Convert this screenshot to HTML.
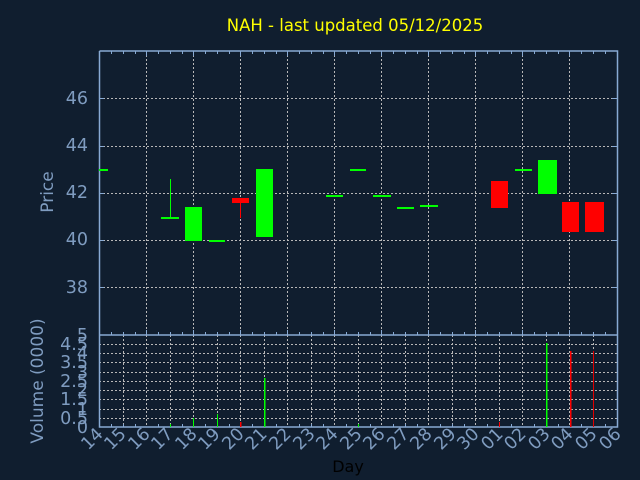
<!DOCTYPE html>
<html><head><meta charset="utf-8"><style>
html,body{margin:0;padding:0;background:#101e2f;width:640px;height:480px;overflow:hidden}
svg text{font-family:"DejaVu Sans","Liberation Sans",sans-serif}
</style></head><body>
<svg width="640" height="480" xmlns="http://www.w3.org/2000/svg">
<rect width="640" height="480" fill="#101e2f"/>
<text x="355" y="31" fill="#ffff00" font-size="16.5" text-anchor="middle">NAH - last updated 05/12/2025</text>
<g stroke="#b8b8b8" stroke-width="1" stroke-dasharray="2,2">
<line x1="99" y1="98.5" x2="617" y2="98.5"/>
<line x1="99" y1="146.5" x2="617" y2="146.5"/>
<line x1="99" y1="193.5" x2="617" y2="193.5"/>
<line x1="99" y1="240.5" x2="617" y2="240.5"/>
<line x1="99" y1="287.5" x2="617" y2="287.5"/>
<line x1="146.5" y1="51" x2="146.5" y2="427"/>
<line x1="193.5" y1="51" x2="193.5" y2="427"/>
<line x1="240.5" y1="51" x2="240.5" y2="427"/>
<line x1="287.5" y1="51" x2="287.5" y2="427"/>
<line x1="334.5" y1="51" x2="334.5" y2="427"/>
<line x1="381.5" y1="51" x2="381.5" y2="427"/>
<line x1="428.5" y1="51" x2="428.5" y2="427"/>
<line x1="475.5" y1="51" x2="475.5" y2="427"/>
<line x1="522.5" y1="51" x2="522.5" y2="427"/>
<line x1="569.5" y1="51" x2="569.5" y2="427"/>
</g>
<g stroke="#b8b8b8" stroke-width="1" stroke-dasharray="2,2">
<line x1="99" y1="344.5" x2="617" y2="344.5"/>
<line x1="99" y1="353.5" x2="617" y2="353.5"/>
<line x1="99" y1="362.5" x2="617" y2="362.5"/>
<line x1="99" y1="372.5" x2="617" y2="372.5"/>
<line x1="99" y1="381.5" x2="617" y2="381.5"/>
<line x1="99" y1="390.5" x2="617" y2="390.5"/>
<line x1="99" y1="399.5" x2="617" y2="399.5"/>
<line x1="99" y1="409.5" x2="617" y2="409.5"/>
<line x1="99" y1="418.5" x2="617" y2="418.5"/>
<line x1="123.5" y1="335" x2="123.5" y2="427"/>
<line x1="170.5" y1="335" x2="170.5" y2="427"/>
<line x1="217.5" y1="335" x2="217.5" y2="427"/>
<line x1="264.5" y1="335" x2="264.5" y2="427"/>
<line x1="311.5" y1="335" x2="311.5" y2="427"/>
<line x1="358.5" y1="335" x2="358.5" y2="427"/>
<line x1="405.5" y1="335" x2="405.5" y2="427"/>
<line x1="452.5" y1="335" x2="452.5" y2="427"/>
<line x1="499.5" y1="335" x2="499.5" y2="427"/>
<line x1="546.5" y1="335" x2="546.5" y2="427"/>
<line x1="593.5" y1="335" x2="593.5" y2="427"/>
</g>
<g stroke="#88aad4" stroke-width="1.5" fill="none">
<path d="M99.5 51 V427 H617.5 V51 H99.5"/>
<line x1="99" y1="335" x2="617" y2="335"/>
</g>
<g stroke="#88aad4" stroke-width="1">
<path d="M111.5 51v3M123.5 51v3M135.5 51v3M158.5 51v3M170.5 51v3M182.5 51v3M205.5 51v3M217.5 51v3M229.5 51v3M252.5 51v3M264.5 51v3M276.5 51v3M299.5 51v3M311.5 51v3M323.5 51v3M346.5 51v3M358.5 51v3M370.5 51v3M393.5 51v3M405.5 51v3M417.5 51v3M440.5 51v3M452.5 51v3M464.5 51v3M487.5 51v3M499.5 51v3M511.5 51v3M534.5 51v3M546.5 51v3M558.5 51v3M581.5 51v3M593.5 51v3M605.5 51v3"/>
<path d="M111.5 335v-3M123.5 335v-3M135.5 335v-3M158.5 335v-3M170.5 335v-3M182.5 335v-3M205.5 335v-3M217.5 335v-3M229.5 335v-3M252.5 335v-3M264.5 335v-3M276.5 335v-3M299.5 335v-3M311.5 335v-3M323.5 335v-3M346.5 335v-3M358.5 335v-3M370.5 335v-3M393.5 335v-3M405.5 335v-3M417.5 335v-3M440.5 335v-3M452.5 335v-3M464.5 335v-3M487.5 335v-3M499.5 335v-3M511.5 335v-3M534.5 335v-3M546.5 335v-3M558.5 335v-3M581.5 335v-3M593.5 335v-3M605.5 335v-3"/>
<path d="M111.5 427v-3M123.5 427v-3M135.5 427v-3M158.5 427v-3M170.5 427v-3M182.5 427v-3M205.5 427v-3M217.5 427v-3M229.5 427v-3M252.5 427v-3M264.5 427v-3M276.5 427v-3M299.5 427v-3M311.5 427v-3M323.5 427v-3M346.5 427v-3M358.5 427v-3M370.5 427v-3M393.5 427v-3M405.5 427v-3M417.5 427v-3M440.5 427v-3M452.5 427v-3M464.5 427v-3M487.5 427v-3M499.5 427v-3M511.5 427v-3M534.5 427v-3M546.5 427v-3M558.5 427v-3M581.5 427v-3M593.5 427v-3M605.5 427v-3"/>
<path d="M146.5 51v5M193.5 51v5M240.5 51v5M287.5 51v5M334.5 51v5M381.5 51v5M428.5 51v5M475.5 51v5M522.5 51v5M569.5 51v5M146.5 335v-5M193.5 335v-5M240.5 335v-5M287.5 335v-5M334.5 335v-5M381.5 335v-5M428.5 335v-5M475.5 335v-5M522.5 335v-5M569.5 335v-5"/>
<path d="M99 98.5h5M99 146.5h5M99 193.5h5M99 240.5h5M99 287.5h5M617 98.5h-5M617 146.5h-5M617 193.5h-5M617 240.5h-5M617 287.5h-5"/>
</g>
<g fill="#00ff00">
<rect x="99" y="169" width="9" height="2"/>
<rect x="161" y="217" width="18" height="2"/><rect x="170" y="179" width="1" height="39"/>
<rect x="185" y="207" width="17" height="34"/>
<rect x="209" y="240" width="16" height="2"/>
<rect x="256" y="169" width="17" height="68"/>
<rect x="326" y="195" width="17" height="2"/>
<rect x="350" y="169" width="16" height="2"/>
<rect x="373" y="195" width="18" height="2"/>
<rect x="397" y="207" width="17" height="2"/>
<rect x="420" y="205" width="18" height="2"/>
<rect x="515" y="169" width="17" height="2"/>
<rect x="538" y="160" width="19" height="34"/>
</g>
<g fill="#ff0000">
<rect x="232" y="198" width="17" height="5"/><rect x="240" y="203" width="1" height="15"/>
<rect x="491" y="181" width="17" height="27"/>
<rect x="562" y="202" width="17" height="30"/>
<rect x="585" y="202" width="19" height="30"/>
</g>
<g>
<rect x="170" y="424" width="1" height="3" fill="#00ff00"/>
<rect x="193" y="418" width="1" height="9" fill="#00ff00"/>
<rect x="217" y="414" width="1" height="13" fill="#00ff00"/>
<rect x="240" y="422" width="1.5" height="5" fill="#ff0000"/>
<rect x="264" y="378" width="1.5" height="49" fill="#00ff00"/>
<rect x="358" y="424" width="1" height="3" fill="#00ff00"/>
<rect x="499" y="422" width="1" height="5" fill="#ff0000"/>
<rect x="546" y="343" width="1.5" height="84" fill="#00ff00"/>
<rect x="570" y="351" width="1.5" height="76" fill="#ff0000"/>
<rect x="593" y="351" width="1" height="76" fill="#dd0000"/>
</g>
<g fill="#7f9cc0" font-size="17.5" text-anchor="end">
<text x="88" y="104">46</text>
<text x="88" y="151">44</text>
<text x="88" y="198">42</text>
<text x="88" y="245">40</text>
<text x="88" y="293">38</text>
<text x="88" y="341">5</text>
<text x="88" y="350">4.5</text>
<text x="88" y="359">4</text>
<text x="88" y="368">3.5</text>
<text x="88" y="378">3</text>
<text x="88" y="387">2.5</text>
<text x="88" y="396">2</text>
<text x="88" y="405">1.5</text>
<text x="88" y="415">1</text>
<text x="88" y="424">0.5</text>
<text x="88" y="433">0</text>
</g>
<text transform="translate(53,192) rotate(-90)" fill="#7f9cc0" font-size="17" text-anchor="middle">Price</text>
<text transform="translate(43,381) rotate(-90)" fill="#7f9cc0" font-size="17" text-anchor="middle">Volume (0000)</text>
<g fill="#7f9cc0" font-size="17.5" text-anchor="end">
<text transform="translate(104,435) rotate(-45)">14</text>
<text transform="translate(127,435) rotate(-45)">15</text>
<text transform="translate(151,435) rotate(-45)">16</text>
<text transform="translate(174,435) rotate(-45)">17</text>
<text transform="translate(198,435) rotate(-45)">18</text>
<text transform="translate(221,435) rotate(-45)">19</text>
<text transform="translate(245,435) rotate(-45)">20</text>
<text transform="translate(268,435) rotate(-45)">21</text>
<text transform="translate(292,435) rotate(-45)">22</text>
<text transform="translate(316,435) rotate(-45)">23</text>
<text transform="translate(339,435) rotate(-45)">24</text>
<text transform="translate(363,435) rotate(-45)">25</text>
<text transform="translate(386,435) rotate(-45)">26</text>
<text transform="translate(410,435) rotate(-45)">27</text>
<text transform="translate(433,435) rotate(-45)">28</text>
<text transform="translate(457,435) rotate(-45)">29</text>
<text transform="translate(480,435) rotate(-45)">30</text>
<text transform="translate(504,435) rotate(-45)">01</text>
<text transform="translate(527,435) rotate(-45)">02</text>
<text transform="translate(551,435) rotate(-45)">03</text>
<text transform="translate(574,435) rotate(-45)">04</text>
<text transform="translate(598,435) rotate(-45)">05</text>
<text transform="translate(622,435) rotate(-45)">06</text>
</g>
<text x="348" y="472" fill="#000000" font-size="16" text-anchor="middle">Day</text>
</svg>
</body></html>
